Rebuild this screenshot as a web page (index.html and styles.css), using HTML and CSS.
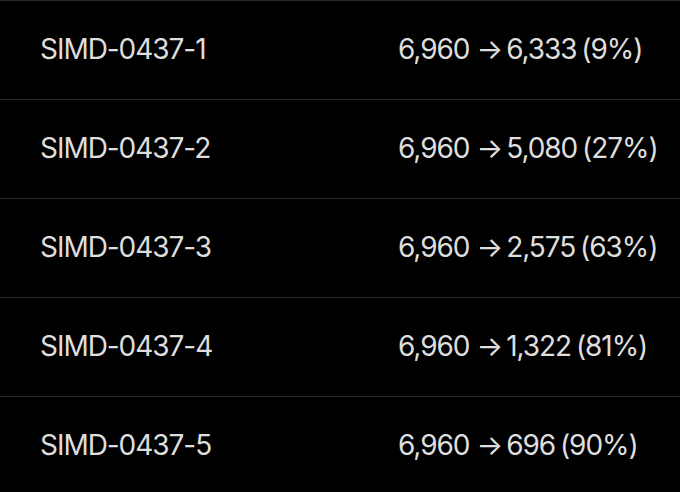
FILE: index.html
```html
<!DOCTYPE html>
<html>
<head>
<meta charset="utf-8">
<link rel="stylesheet" href="styles.css">
</head>
<body>
<div class="table">
  <div class="row"><div class="name">SIMD-0437-1</div><div class="value">6,960<span class="arrow">→</span>6,333 (9%)</div></div>
  <div class="row"><div class="name">SIMD-0437-2</div><div class="value">6,960<span class="arrow">→</span>5,080 (27%)</div></div>
  <div class="row"><div class="name">SIMD-0437-3</div><div class="value">6,960<span class="arrow">→</span>2,575 (63%)</div></div>
  <div class="row"><div class="name">SIMD-0437-4</div><div class="value">6,960<span class="arrow">→</span>1,322 (81%)</div></div>
  <div class="row"><div class="name">SIMD-0437-5</div><div class="value">6,960<span class="arrow">→</span>696 (90%)</div></div>
</div>
</body>
</html>
```
FILE: styles.css
```css
html, body {
  margin: 0;
  padding: 0;
  background: #000;
}
body {
  font-family: Inter, "Noto Sans", sans-serif;
  color: #dedede;
  overflow: hidden;
}
.table {
  display: flex;
  flex-direction: column;
}
.row {
  box-sizing: border-box;
  display: grid;
  grid-template-columns: 358px 1fr;
  align-items: center;
  height: 99px;
  border-top: 1px solid #2a2a2a;
  padding: 0 0 3px 40px;
  font-size: 28px;
  letter-spacing: -1.05px;
  white-space: nowrap;
}
.value {
  word-spacing: -2px;
}
.arrow {
  letter-spacing: 0;
  margin: 0 3px 0 7px;
}
```
